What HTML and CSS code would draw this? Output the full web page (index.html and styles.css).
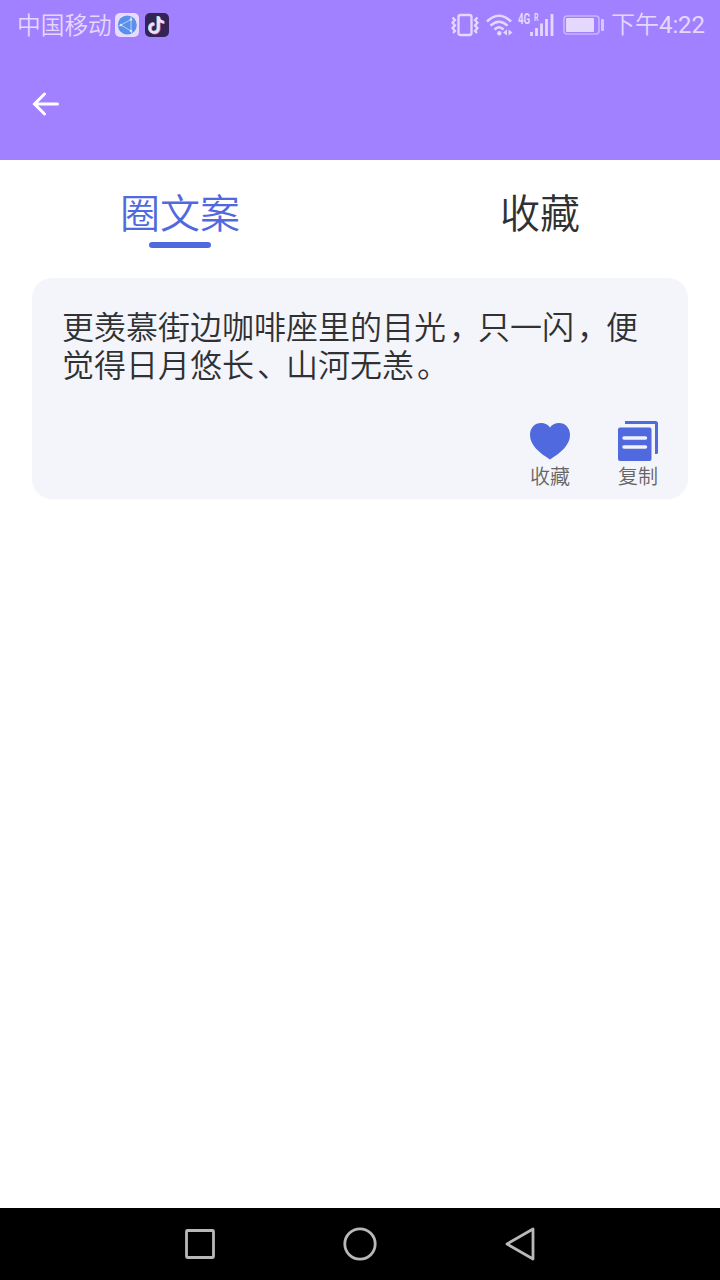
FILE: index.html
```html
<!DOCTYPE html>
<html lang="zh-CN">
<head>
<meta charset="utf-8">
<title>圈文案</title>
<link rel="stylesheet" href="styles.css">
</head>
<body>
<header class="header">
  <div class="status">
    <span class="carrier">中国移动</span>
    <svg class="app-icon" viewBox="0 0 24 24"><rect width="24" height="24" rx="5" fill="#e8dcfc"/><circle cx="12.300" cy="12" r="9.500" fill="#5990ec"/><path d="M6 12 16 6.500V18Z M6 12l-2.500 1M16 6.500V3.500M16 18l1 2.500" fill="none" stroke="#b9cffa" stroke-width="1"/><g fill="#dce6ff"><circle cx="6" cy="12" r="1.300"/><circle cx="16" cy="6.500" r="1.300"/><circle cx="16" cy="18" r="1.300"/></g></svg>
    <svg class="app-icon" viewBox="0 0 24 24"><rect width="24" height="24" rx="5" fill="#342456"/><g fill="none" stroke-width="2.600"><path d="M13.500 3.500v11.700a4.300 4.300 0 1 1-4.300-4.300M13.500 4.500c.5 2.900 2.300 4.400 5.500 4.700" stroke="#8edbe8" transform="translate(-.7 -.5)"/><path d="M13.500 3.500v11.700a4.300 4.300 0 1 1-4.300-4.300M13.500 4.500c.5 2.900 2.300 4.400 5.500 4.700" stroke="#dc6c9d" transform="translate(.8 .6)"/><path d="M13.500 3.500v11.700a4.300 4.300 0 1 1-4.300-4.300M13.500 4.500c.5 2.900 2.300 4.400 5.500 4.700" stroke="#eee3fb"/></g></svg>
    <div class="system">
      <svg class="vibrate" viewBox="0 0 28 24"><g fill="none" stroke="#e5d8ff" stroke-width="2.300"><rect x="7.500" y="2" width="13" height="20" rx="2"/><path d="M1.500 4.500 4 7 1.500 9.700 4 12.400 1.500 15.100 4 18 2 20M26.500 4.500 24 7l2.500 2.700L24 12.400l2.500 2.700L24 18l2 2"/></g></svg>
      <svg class="wifi" viewBox="0 0 28 24"><g fill="none" stroke="#e5d8ff" stroke-width="2.500"><path d="M1 8.500Q13 -3 25 8.500M4.500 12.700Q13 4.700 21.500 12.700M8.500 16.500Q13 12 17.500 16.500"/></g><circle cx="13.300" cy="20.300" r="2.200" fill="#e5d8ff"/><path d="M17 19.500 21 16.500V22.500ZM22.500 16.500 26.500 19.500 22.500 22.500Z" fill="#e5d8ff"/></svg>
      <span class="signal">
        <span class="net">4G</span><span class="roam">R</span>
        <svg class="bars" viewBox="0 0 24 22"><path d="M1.500 18v4M6.500 14v8M11.500 9.500V22M16.500 5V22M22 0V22" stroke="#e5d8ff" stroke-width="2.800"/></svg>
      </span>
      <svg class="battery" viewBox="0 0 42 20"><rect x="1" y="1" width="35" height="18" rx="3" fill="none" stroke="#cbb3ff" stroke-width="1.600"/><rect x="3" y="3" width="28" height="14" rx="1" fill="#e5d8ff"/><rect x="38" y="4" width="3" height="12" rx="1" fill="#d8c7ff"/></svg>
      <span class="time">下午<span class="clock">4:22</span></span>
    </div>
  </div>
  <div class="toolbar">
    <svg class="back" viewBox="0 0 28 24"><path d="M25.500 12H3M12.500 2 2.500 12l10 10" fill="none" stroke="#fff" stroke-width="3" stroke-linecap="round"/></svg>
  </div>
</header>
<main class="main">
  <nav class="tabs">
    <div class="tab tab-active">圈文案</div>
    <div class="tab">收藏</div>
  </nav>
  <article class="card">
    <p class="quote">更羡慕街边咖啡座里的目光<span class="comma">，</span>只一闪<span class="comma">，</span>便<br>觉得日月悠长<span class="comma">、</span>山河无恙<span class="comma">。</span></p>
    <div class="actions">
      <div class="action">
        <svg class="action-icon" viewBox="0 0 40 40"><path d="M20 38.500C9 31.500 0 24 0 14 0 6.500 5 2 11 2c4 0 7 1.700 9 4.500C22 3.700 25 2 29 2c6 0 11 4.500 11 12 0 10-9 17.500-20 24.500Z" fill="#5169de"/></svg>
        <span>收藏</span>
      </div>
      <div class="action">
        <svg class="action-icon" viewBox="0 0 40 40"><path d="M7 0H37.500Q40 0 40 2.500V31.500Q40 33 38.500 33H37V3H7ZM2 6.500H31.500Q33.500 6.500 33.500 8.500V38Q33.500 40 31.500 40H2Q0 40 0 38V8.500Q0 6.500 2 6.500Z" fill="#5169de"/><path d="M6 17H27.500M6 26H27.500" stroke="#f0f2fc" stroke-width="3.500" stroke-linecap="round"/></svg>
        <span>复制</span>
      </div>
    </div>
  </article>
</main>
<footer class="navbar">
  <svg class="nav-icon" viewBox="0 0 40 40"><rect x="6.500" y="6.500" width="27" height="27" rx="1"/></svg>
  <svg class="nav-icon" viewBox="0 0 40 40"><circle cx="20" cy="20" r="15.200"/></svg>
  <svg class="nav-icon" viewBox="0 0 40 40"><path d="M33 5V35L7 20Z"/></svg>
</footer>
</body>
</html>
```
FILE: styles.css
```css
* { box-sizing: border-box; }
body {
  margin: 0;
  height: 1280px;
  display: flex;
  flex-direction: column;
  background: #fff;
  font-family: Roboto, "Noto Sans CJK SC", sans-serif;
}
svg { display: block; flex: none; }
.header { height: 160px; background: #a181ff; }
.status {
  height: 50px;
  padding: 0 15px 0 16px;
  display: flex;
  align-items: center;
  color: #e5d8ff;
  font-size: 24px;
  font-weight: 350;
  line-height: 50px;
}
.carrier { width: 99px; padding: 1px 0 0 1px; font-size: 23.700px; white-space: nowrap; }
.app-icon { width: 24px; height: 24px; margin-right: 6px; }
.system { display: flex; align-items: center; margin-left: auto; }
.vibrate { width: 28px; height: 24px; margin-right: 7px; }
.wifi { width: 28px; height: 24px; margin-right: 4px; }
.signal { width: 36px; height: 24px; display: flex; align-items: flex-start; margin-right: 9px; }
.net, .roam {
  flex: none;
  font-size: 14px;
  line-height: 12px;
  font-weight: 700;
  width: 16px;
  transform: scaleX(.7);
  transform-origin: left;
}
.roam { font-size: 10px; line-height: 10px; width: 6px; }
.bars { width: 24px; height: 22px; margin: 1px 0 0 -10px; }
.battery { width: 42px; height: 20px; margin-right: 6px; }
.time { width: 94px; white-space: nowrap; }
.clock { font-weight: 400; letter-spacing: -.1px; }
.toolbar { height: 110px; padding: 42px 32px; }
.back { width: 28px; height: 24px; }
.main { flex: 1; }
.tabs { display: grid; grid-template-columns: 1fr 1fr; height: 118px; }
.tab {
  display: flex;
  flex-direction: column;
  align-items: center;
  padding-top: 28px;
  font-size: 40px;
  line-height: 54px;
  font-weight: 350;
  color: #303133;
}
.tab-active { color: #5169de; }
.tab-active::after {
  content: "";
  width: 62px;
  height: 6px;
  border-radius: 3px;
  background: #5169de;
}
.card {
  height: 221px;
  margin: 0 32px;
  padding: 31px 30px 0;
  border-radius: 20px;
  background: #f4f5fb;
}
.quote {
  margin: 0;
  height: 112px;
  font-size: 32px;
  line-height: 38px;
  font-weight: 350;
  color: #303133;
  white-space: nowrap;
}
.comma { padding-left: 3px; margin-right: -3px; }
.actions { display: flex; justify-content: flex-end; gap: 48px; }
.action { width: 40px; font-size: 20px; line-height: 32px; color: #666; font-weight: 350; }
.action-icon { width: 40px; height: 40px; }
.action span { display: block; }
.navbar {
  height: 72px;
  display: flex;
  justify-content: center;
  align-items: center;
  gap: 120px;
  background: #000;
}
.nav-icon {
  width: 40px;
  height: 40px;
  fill: none;
  stroke: #b8b8b8;
  stroke-width: 2.800;
  stroke-linejoin: round;
}
```
